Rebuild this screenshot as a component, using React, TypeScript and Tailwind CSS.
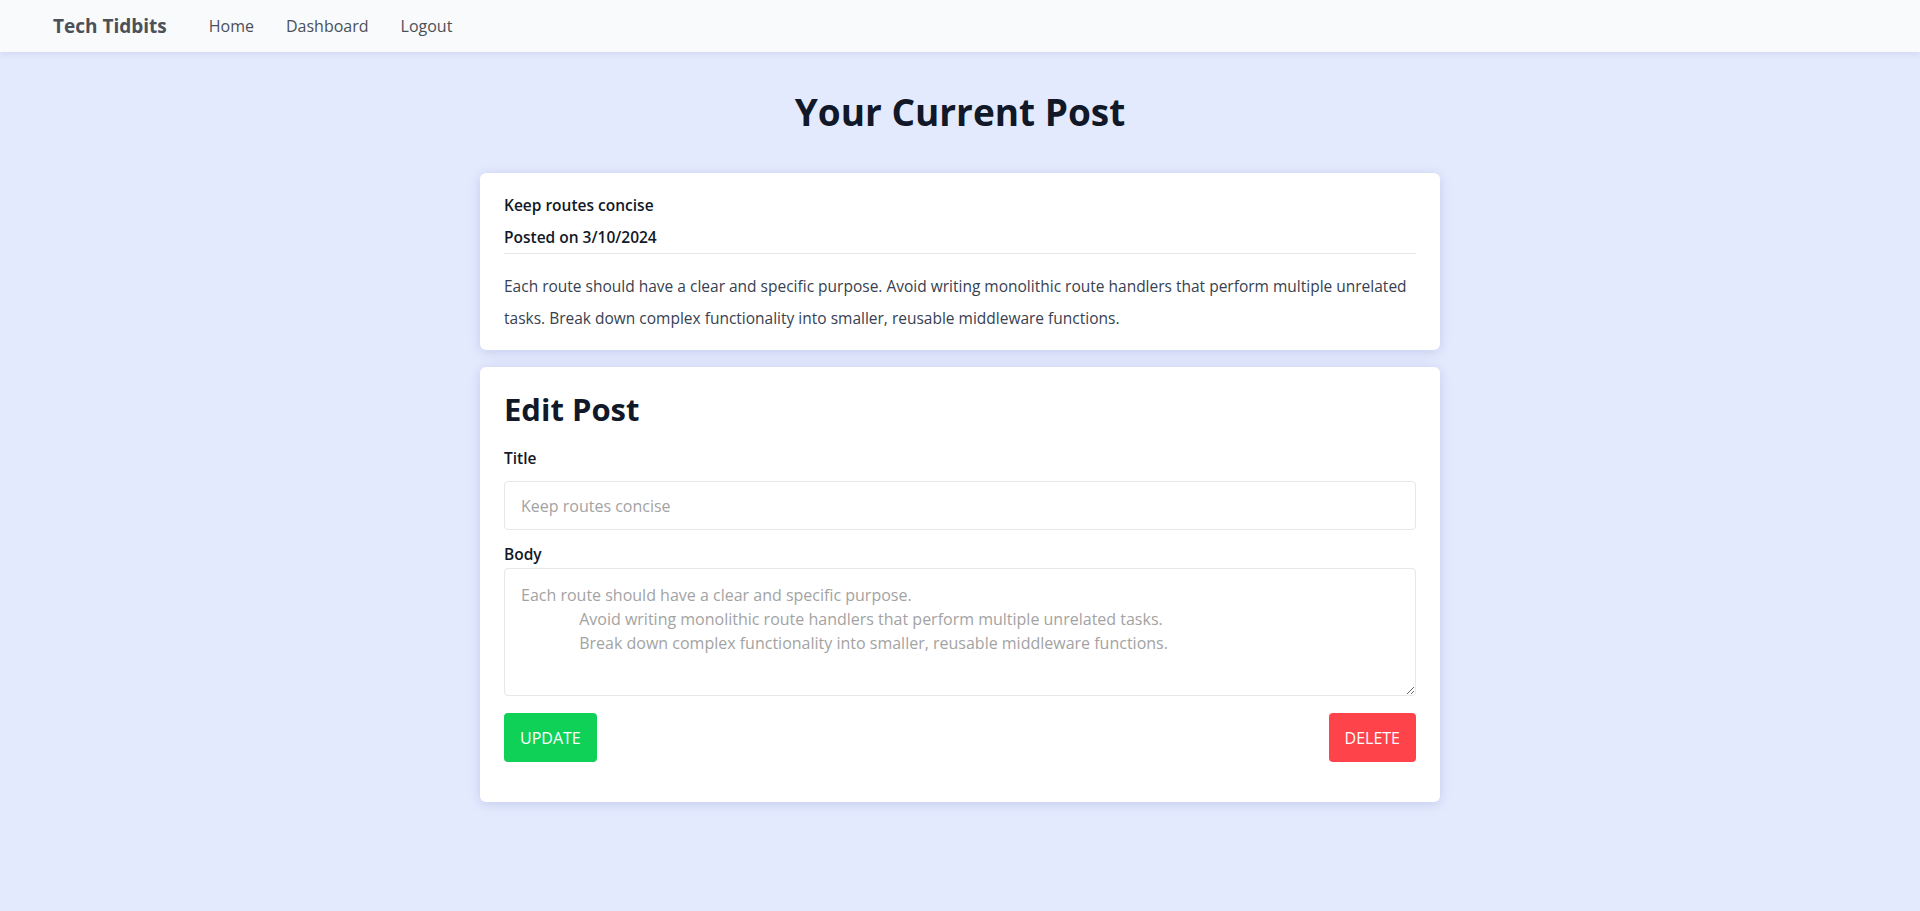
import React from "react";

const bodyPlaceholder =
  "Each route should have a clear and specific purpose.\n              Avoid writing monolithic route handlers that perform multiple unrelated tasks.\n              Break down complex functionality into smaller, reusable middleware functions.";

function Navbar() {
  return (
    <nav className="h-[52px] bg-[#f8fafc] shadow-[0_2px_6px_rgba(120,130,170,0.18)] flex items-center pl-[53px] relative z-10">
      <span className="text-[19px] font-bold text-[#4b5059] mr-[42px]">Tech Tidbits</span>
      <div className="flex items-center gap-8 text-base font-medium text-[#4b5059]">
        <a href="#">Home</a>
        <a href="#">Dashboard</a>
        <a href="#">Logout</a>
      </div>
    </nav>
  );
}

export default function App() {
  return (
    <div className="min-h-[911px] bg-[#e4eafe] font-['Open_Sans','Noto_Sans',sans-serif] text-[#111827]">
      <Navbar />
      <main className="flex flex-col items-center">
        <h1 className="pt-9 mb-[37px] text-[37px] leading-[48px] font-bold text-[#111827]">Your Current Post</h1>

        {/* current post */}
        <section className="w-[960px] bg-white rounded-md shadow-[0_2px_12px_rgba(100,116,180,0.25)] px-6 pt-5 pb-4">
          <h2 className="text-[15.5px] leading-6 font-semibold">Keep routes concise</h2>
          <p className="mt-2 text-[15.5px] leading-6 font-semibold pb-1 border-b border-[#e5e7eb]">Posted on 3/10/2024</p>
          <p className="mt-4 text-[15.5px] leading-8 text-[#374151]">
            Each route should have a clear and specific purpose. Avoid writing monolithic route handlers that perform multiple unrelated tasks. Break down complex functionality into smaller, reusable middleware functions.
          </p>
        </section>

        {/* edit form */}
        <section className="mt-[17px] w-[960px] bg-white rounded-md shadow-[0_2px_12px_rgba(100,116,180,0.25)] px-6 pt-6 pb-10">
          <h2 className="text-[31px] leading-9 font-bold">Edit Post</h2>
          <label className="block mt-[19px] text-[15.5px] leading-6 font-semibold">Title</label>
          <input
            className="block mt-[11px] w-full h-[49px] px-4 border border-[#e5e7eb] rounded text-base placeholder:text-[#a3a3a3] outline-none"
            placeholder="Keep routes concise"
          />
          <label className="block mt-[12px] text-[15.5px] leading-6 font-semibold">Body</label>
          <textarea
            className="block mt-[2px] w-full h-32 px-4 py-3.5 border border-[#e5e7eb] rounded text-base leading-6 placeholder:text-[#a3a3a3] outline-none"
            placeholder={bodyPlaceholder}
          />
          <div className="mt-[17px] flex justify-between">
            <button className="h-[49px] px-4 rounded bg-[#0fd158] text-white text-base">UPDATE</button>
            <button className="h-[49px] px-4 rounded bg-[#fe434a] text-white text-base">DELETE</button>
          </div>
        </section>
      </main>
    </div>
  );
}
